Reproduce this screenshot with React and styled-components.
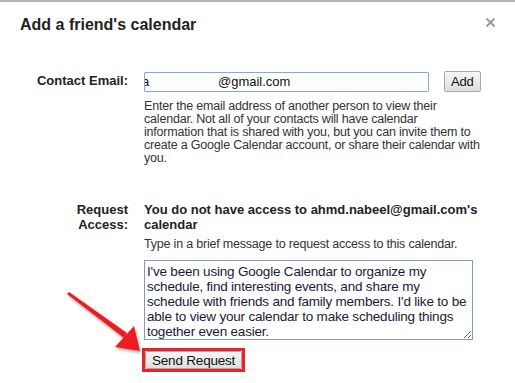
import React from 'react'
import styled, { createGlobalStyle } from 'styled-components'

const Global = createGlobalStyle`
  html, body {
    margin: 0;
    padding: 0;
    background: #fff;
  }
  body {
    font-family: 'Liberation Sans', Arial, sans-serif;
    color: #222;
  }
`

const Dialog = styled.div`
  position: relative;
  width: 515px;
  height: 383px;
  box-sizing: border-box;
  border-top: 2px solid #b4b4b4;
  padding: 13px 20px 0 20px;
  overflow: hidden;
`

const Header = styled.div`
  display: flex;
  justify-content: space-between;
  align-items: flex-start;
`

const Title = styled.h1`
  margin: 0;
  font-size: 16px;
  line-height: 20px;
  font-weight: bold;
  color: #222;
`

const Close = styled.button`
  border: 0;
  background: none;
  padding: 0;
  margin: 1px -1px 0 0;
  width: 12px;
  height: 12px;
  display: flex;
  align-items: center;
  justify-content: center;
  cursor: pointer;
`

const Form = styled.div`
  display: grid;
  grid-template-columns: 108px 341px;
  column-gap: 16px;
  margin-top: 36px;
`

const Label = styled.div`
  text-align: right;
  font-size: 13px;
  font-weight: bold;
  line-height: ${p => (p.$tall ? '15px' : '20px')};
  color: #222;
  margin-top: ${p => p.$top || 0}px;
`

const Field = styled.div`
  display: flex;
  flex-direction: column;
  margin-top: ${p => p.$top || 0}px;
`

const InputRow = styled.div`
  display: flex;
  align-items: center;
`

const FakeInput = styled.div`
  width: 285px;
  height: 20px;
  box-sizing: border-box;
  border: 1px solid #7eaae6;
  border-radius: 1px;
  display: flex;
  align-items: center;
  font-size: 13px;
  color: #111;
  overflow: hidden;
  white-space: nowrap;
`

const Clipped = styled.span`
  margin-left: -3px;
  width: 76px;
`

const Button = styled.button`
  font-family: inherit;
  font-size: ${p => p.$size || 13}px;
  letter-spacing: -0.2px;
  color: #111;
  height: ${p => p.$h || 21}px;
  padding: 0 ${p => p.$px || 5}px;
  margin-left: ${p => p.$ml || 0}px;
  border: 1px solid #a8a8a8;
  border-radius: 2px;
  background: linear-gradient(#f6f6f6, #dedede);
  cursor: pointer;
`

const Help = styled.p`
  margin: ${p => p.$mt || 0}px 0 0 0;
  font-size: 12.5px;
  letter-spacing: -0.2px;
  line-height: 13px;
  color: #333;
  white-space: nowrap;
`

const Heading = styled.div`
  font-size: 13px;
  font-weight: bold;
  line-height: 15px;
  color: #222;
`

const Message = styled.textarea`
  margin-top: 9px;
  width: 329px;
  height: 80px;
  box-sizing: border-box;
  border: 1px solid #7f9db9;
  padding: 3px 2px;
  font-family: inherit;
  font-size: 13.5px;
  letter-spacing: -0.2px;
  line-height: 15px;
  color: #1a1a33;
  resize: both;
  overflow: hidden;
`

const Highlight = styled.div`
  align-self: flex-start;
  margin: 8px 0 0 -2px;
  border: 3px solid #e8212b;
  padding: 0;
  display: flex;
`

const Arrow = styled.svg`
  position: absolute;
  left: 0;
  top: 0;
  pointer-events: none;
`

const requestText =
  "I've been using Google Calendar to organize my schedule, find interesting events, and share my schedule with friends and family members. I'd like to be able to view your calendar to make scheduling things together even easier."

const helpLines = [
  'Enter the email address of another person to view their',
  'calendar. Not all of your contacts will have calendar',
  'information that is shared with you, but you can invite them to',
  'create a Google Calendar account, or share their calendar with',
  'you.',
]

export default function App() {
  return (
    <Dialog>
      <Global />
      <Header>
        <Title>Add a friend's calendar</Title>
        <Close aria-label="Close">
          <svg width="11" height="11" viewBox="0 0 11 11">
            <path d="M1.5 1.5 L9.5 9.5 M9.5 1.5 L1.5 9.5" stroke="#999" strokeWidth="2" />
          </svg>
        </Close>
      </Header>

      <Form>
        <Label>Contact Email:</Label>
        <Field>
          <InputRow>
            <FakeInput>
              <Clipped>a</Clipped>
              <span>@gmail.com</span>
            </FakeInput>
            <Button $ml={15} $px={6}>Add</Button>
          </InputRow>
          <Help $mt={8}>
            {helpLines.map((line, i) => (
              <React.Fragment key={i}>
                {line}
                {i < helpLines.length - 1 && <br />}
              </React.Fragment>
            ))}
          </Help>
        </Field>

        <Label $tall $top={37}>Request<br />Access:</Label>
        <Field $top={37}>
          <Heading>You do not have access to ahmd.nabeel@gmail.com's calendar</Heading>
          <Help $mt={6}>Type in a brief message to request access to this calendar.</Help>
          <Message defaultValue={requestText} />
          <Highlight>
            <Button $size={13.5} $h={18} $px={6}>Send Request</Button>
          </Highlight>
        </Field>
      </Form>

      <Arrow width="515" height="383" viewBox="0 0 515 383">
        <defs>
          <filter id="sh" x="-20%" y="-20%" width="140%" height="140%">
            <feDropShadow dx="1" dy="2" stdDeviation="1.5" floodColor="#000" floodOpacity="0.35" />
          </filter>
        </defs>
        <g filter="url(#sh)" fill="#ee1c24">
          <polygon points="67,292 69,290 127,331 124,336" />
          <polygon points="140,349 115,345 134,324" />
        </g>
      </Arrow>
    </Dialog>
  )
}
